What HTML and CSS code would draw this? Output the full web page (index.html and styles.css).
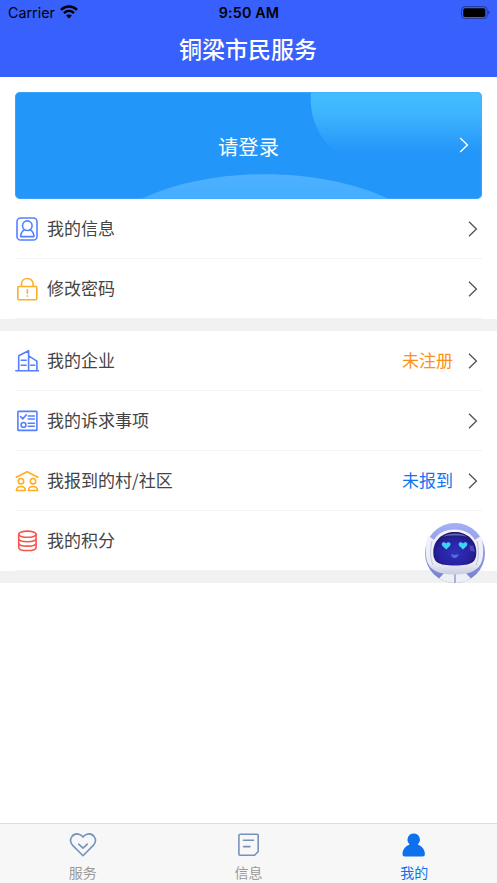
FILE: index.html
```html
<!DOCTYPE html>
<html lang="zh-CN">
<head>
<meta charset="utf-8">
<meta name="viewport" content="width=device-width, initial-scale=1">
<title>铜梁市民服务</title>
<link rel="stylesheet" href="styles.css">
</head>
<body>
<div class="app">
  <header class="header">
    <div class="status">
      <div class="carrier"><span>Carrier</span>
        <svg width="18" height="14" viewBox="0 0 18 14" fill="none" stroke="#000" stroke-width="2.5"><path d="M1 4.8C5.5.4 12.5.4 17 4.8M4 8.1c2.9-2.7 7.1-2.7 10 0"/><path d="M9 13.5 6.1 10.6c1.6-1.4 4.2-1.4 5.8 0Z" fill="#000" stroke="none"/></svg>
      </div>
      <span class="time">9:50 AM</span>
      <svg class="battery" width="29" height="13" viewBox="0 0 29 13"><rect x=".6" y=".6" width="25.6" height="12" rx="3.4" fill="none" stroke="#000" stroke-opacity=".4" stroke-width="1"/><rect x="2.3" y="2.2" width="22" height="8.8" rx="1.7"/><path d="M27.4 4.5c1.6.7 1.6 3.5 0 4.2Z" opacity=".5"/></svg>
    </div>
    <h1 class="title">铜梁市民服务</h1>
  </header>

  <main class="main">
    <section class="login">
      <svg class="login-art" width="467" height="107" viewBox="0 0 467 107">
        <defs>
          <linearGradient id="top" x1="0" y1="0" x2="0" y2="60" gradientUnits="userSpaceOnUse"><stop stop-color="#43bdff"/><stop offset=".35" stop-color="#3eb5fd"/><stop offset="1" stop-color="#2396f9"/></linearGradient>
          <linearGradient id="hill" x1="0" y1="82" x2="0" y2="107" gradientUnits="userSpaceOnUse"><stop stop-color="#50b0ff"/><stop offset="1" stop-color="#43aeff"/></linearGradient>
        </defs>
        <path d="M296 0C294 23 302 46 324 63H467V0Z" fill="url(#top)"/>
        <path d="M126 107C196 74 304 74 374 107Z" fill="url(#hill)"/>
        <rect x=".5" y=".5" width="466" height="106" rx="4.500" fill="none" stroke="#4ca9f8" stroke-opacity=".6"/>
      </svg>
      <span class="login-text">请登录</span>
      <svg class="login-arrow" width="10" height="16" viewBox="0 0 10 16"><path d="m1.200 1 7.200 7-7.200 7"/></svg>
    </section>

    <section class="group">
      <div class="row">
        <svg class="icon blue" viewBox="0 0 24 24"><rect x="2" y="1" width="20" height="22" rx="3.6"/><circle cx="12.3" cy="8.7" r="4.8"/><path d="M9.5 12.7C7 14.5 5.6 16.5 5.6 19.6H19c0-3.1-1.4-5.1-3.9-6.9"/></svg>
        <span class="label">我的信息</span>
        <svg class="arrow" viewBox="0 0 10 16"><path d="m1 .8 7.400 7.200L1 15.200"/></svg>
      </div>
      <div class="row">
        <svg class="icon yellow" viewBox="0 0 24 24"><rect x="2.8" y="9.5" width="19" height="13.3" rx="1.2"/><path d="M6.5 9.3V7c0-7.400 11.600-7.400 11.600 0v2.300M12.400 12.700v3.600M12.400 18.900v.3"/></svg>
        <span class="label">修改密码</span>
        <svg class="arrow" viewBox="0 0 10 16"><path d="m1 .8 7.400 7.200L1 15.200"/></svg>
      </div>
    </section>
    <section class="group">
      <div class="row">
        <svg class="icon blue" viewBox="0 0 24 24"><path d="M.8 21.8h23.400M3.700 21.500V6.800l9.900-5.100v19.800M13.600 6.900l8.300 5.200v9.400M6.200 11.200h5M6.200 16.300h5M15.700 16.300h4"/></svg>
        <span class="label">我的企业</span>
        <span class="value orange">未注册</span>
        <svg class="arrow" viewBox="0 0 10 16"><path d="m1 .8 7.400 7.200L1 15.200"/></svg>
      </div>
      <div class="row">
        <svg class="icon blue" viewBox="0 0 24 24"><rect x="2.9" y="2.4" width="19" height="19" rx=".7"/><path d="m5.500 7.500 2.200 2.400 3.600-4.100M13.200 7h6.200M13.200 10h6.200M13.200 14.200h6.200M13.200 17.300h6.200"/><circle cx="8.500" cy="15.900" r="2.400"/></svg>
        <span class="label">我的诉求事项</span>
        <svg class="arrow" viewBox="0 0 10 16"><path d="m1 .8 7.400 7.200L1 15.200"/></svg>
      </div>
      <div class="row">
        <svg class="icon yellow" viewBox="0 0 24 24"><path d="M1.300 8.200 12.100 2.800l10.800 5.400"/><circle cx="6" cy="12.200" r="2.700"/><circle cx="18" cy="12.200" r="2.700"/><path d="M1.400 21.500c.2-2.700 1.700-4 4.600-4s4.200 1.300 4.400 4ZM13.400 21.500c.2-2.700 1.700-4 4.600-4s4.400 1.300 4.600 4Z"/></svg>
        <span class="label">我报到的村/社区</span>
        <span class="value azure">未报到</span>
        <svg class="arrow" viewBox="0 0 10 16"><path d="m1 .8 7.400 7.200L1 15.200"/></svg>
      </div>
      <div class="row">
        <svg class="icon red" viewBox="0 0 24 24"><ellipse cx="12.400" cy="5.200" rx="8.700" ry="3.100"/><path d="M3.700 5.200v13.200c0 4.100 17.400 4.100 17.400 0V5.200M3.700 9.600c0 4.100 17.400 4.100 17.400 0M3.700 14c0 4.100 17.400 4.100 17.400 0"/></svg>
        <span class="label">我的积分</span>
      </div>
    </section>
  </main>

  <svg class="robot" width="60" height="60" viewBox="0 0 60 60">
    <defs>
      <clipPath id="disc"><circle cx="30" cy="30" r="30"/></clipPath>
      <linearGradient id="shell" x1="0" y1="0" x2="0" y2="1"><stop stop-color="#f3f4fa"/><stop offset=".75" stop-color="#ececf5"/><stop offset="1" stop-color="#c9cbe0"/></linearGradient>
      <radialGradient id="visor" cx=".5" cy=".6" r=".6"><stop stop-color="#3030bd"/><stop offset=".65" stop-color="#2821a0"/><stop offset="1" stop-color="#191663"/></radialGradient>
      <linearGradient id="sky" x1="0" y1="0" x2="0" y2="1"><stop stop-color="#a5aff4"/><stop offset="1" stop-color="#7380d0"/></linearGradient>
    </defs>
    <circle cx="30" cy="30" r="30" fill="url(#sky)"/>
    <g clip-path="url(#disc)">
      <path d="M12 60c1-5 5-7 7-10h22c2 3 6 5 7 10Z" fill="#eeeff6"/>
      <path d="M30 51v9" stroke="#969bc0" stroke-width="1.5"/>
    </g>
    <path d="M3 13c2 1 4 2 6 4C13 10 20 6.500 29.500 6.500S46 10 50 17c2-2 4-3 6-4 2 6 2.500 14 2 19-.5 7-3 12-8 15-5 3.500-12 4.500-20.500 4.500S14 50.500 9 47c-5-3-7.500-8-8-15-.5-5 0-13 2-19Z" fill="url(#shell)"/>
    <path d="M7 18c-2 8-2 17 1 24M52 18c2 8 2 17-1 24" fill="none" stroke="#c3c6dd" stroke-width="1"/>
    <path d="M29.800 9C18 9 8.300 17 8.300 29c0 10 4 13.500 21.500 13.500S51.300 39 51.300 29c0-12-9.700-20-21.500-20Z" fill="url(#visor)"/>
    <path d="M18 13.500c6-4 18-4 24 0-5-1.500-19-1.500-24 0Z" fill="#6667a9"/>
    <path d="M44.500 22.500h3.500l2 6c-1 0-3 0-5-1Z" fill="#6258bf" opacity=".7"/>
    <path d="m21.200 26.400-3.700-3.400c-2-2.600 1-5.200 3.700-2.600 2.700-2.600 5.700 0 3.700 2.600Z" fill="#38d7ee"/>
    <path d="m38 26.400-3.700-3.400c-2-2.600 1-5.200 3.700-2.600 2.700-2.600 5.700 0 3.700 2.600Z" fill="#38d7ee"/>
    <path d="M26 31c2 1 5.500 1 7.500 0 0 5.500-7.500 5.500-7.500 0Z" fill="#4b70da"/>
  </svg>

  <nav class="tabs">
    <div class="tab"><svg width="28" height="26" viewBox="0 0 28 26"><path d="M14 23.700 3.700 13.400C-1.500 7.500 4 .2 10.600 2.400c1.500.5 2.500 1.500 3.400 2.700.9-1.200 1.900-2.200 3.400-2.700C24 .2 29.500 7.500 24.300 13.400Z"/><path d="m9.700 12.200 4.300 4 4.300-4"/></svg><span>服务</span></div>
    <div class="tab"><svg width="28" height="26" viewBox="0 0 28 26"><path d="M5.300 2.300h16.900q1 0 1 1v16.200l-3.600 3.800H5.300q-1.400 0-1.400-1.400V3.700Q3.900 2.300 5.300 2.300ZM8.500 8.200h10M8.500 14.600h6.500"/></svg><span>信息</span></div>
    <div class="tab active"><svg width="28" height="26" viewBox="0 0 28 26"><path d="M13.700 1.500a6.200 6.200 0 0 1 4 10.900c4.300 1.600 7.200 5 7.200 9.600q0 2.500-2.500 2.500H5q-2.500 0-2.500-2.500c0-4.600 2.900-8 7.200-9.600a6.200 6.200 0 0 1 4-10.900Z"/></svg><span>我的</span></div>
  </nav>
</div>
</body>
</html>
```
FILE: styles.css
```css
* { box-sizing: border-box; }
body {
  margin: 0;
  background: #fff;
  color: #444;
  font-family: "Noto Sans CJK SC", sans-serif;
}
svg { display: block; flex: none; }
.app { position: relative; height: 883px; display: flex; flex-direction: column; overflow: hidden; }
.header { height: 77px; background: #3860fc; }
.status {
  height: 26px;
  padding: 0 7px 0 8px;
  display: grid;
  grid-template-columns: 1fr auto 1fr;
  align-items: center;
  color: #000;
  font: 14.3px/20px Inter, sans-serif;
}
.carrier { display: flex; align-items: center; gap: 5px; }
.carrier svg { margin-top: -2px; }
.time { font-weight: 600; letter-spacing: .15px; }
.battery { justify-self: end; margin-top: -1px; }
.title {
  margin: 0;
  padding-right: 1px;
  text-align: center;
  color: #fff;
  font-weight: 500;
  font-size: 23px;
  line-height: 45px;
}
.main { flex: 1; padding-top: 15px; }
.login {
  position: relative;
  height: 107px;
  margin: 0 15px;
  border-radius: 5px;
  overflow: hidden;
  background: #2396f9;
  display: flex;
  align-items: center;
  justify-content: center;
}
.login-art { position: absolute; inset: 0; }
.login-text { position: relative; padding-top: 1px; color: #fff; font-size: 20.3px; line-height: 30px; }
.login-arrow { position: absolute; right: 13px; top: 45px; fill: none; stroke: #fff; stroke-width: 1.4; }
.group { border-bottom: 12px solid #f1f1f1; }
.row {
  height: 60px;
  margin: 0 15px;
  padding-right: 4px;
  border-bottom: 1px solid #f3f3f3;
  display: flex;
  align-items: center;
}
.icon { width: 24px; height: 24px; fill: none; stroke-width: 1.6; stroke-linejoin: round; stroke-linecap: round; }
.blue { stroke: #557fff; }
.yellow { stroke: #ffae24; }
.red { stroke: #f7554d; }
.label { flex: 1; margin-left: 8px; padding-bottom: 1px; font-size: 17px; line-height: 24px; }
.value { margin-right: 15px; padding-bottom: 1px; font-size: 17px; line-height: 24px; }
.orange { color: #fa9119; }
.azure { color: #1175ed; }
.arrow { width: 10px; height: 16px; fill: none; stroke: #555; stroke-width: 1.35; }
.robot { position: absolute; left: 425px; top: 523px; }
.tabs { height: 60px; display: flex; background: #f7f7f7; border-top: 1px solid #dedede; }
.tab { flex: 1; padding-top: 8px; display: flex; flex-direction: column; align-items: center; color: #999; font-size: 14px; line-height: 20px; }
.tab svg { fill: none; stroke: #7592bc; stroke-width: 1.6; stroke-linecap: round; stroke-linejoin: round; }
.tab span { margin-top: 4px; }
.tab.active { color: #0d71ed; }
.tab.active svg { fill: #0d71ed; stroke: none; }
```
